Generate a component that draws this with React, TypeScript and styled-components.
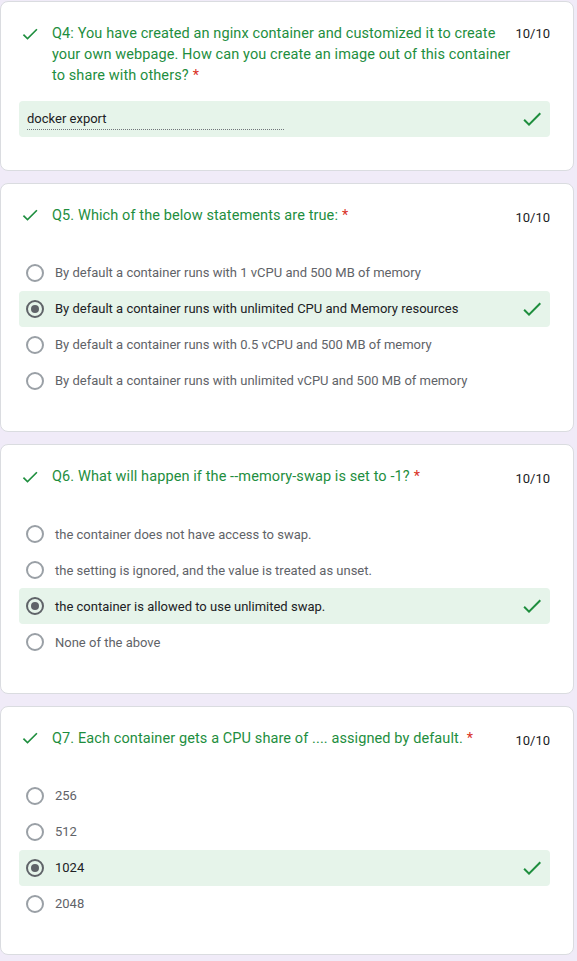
import React from "react";
import styled, { createGlobalStyle } from "styled-components";

const GlobalStyle = createGlobalStyle`
  html, body { margin: 0; padding: 0; background: #f0ebf8; }
  body { font-family: Roboto, "Liberation Sans", Arial, sans-serif; }
`;

const Page = styled.div`
  display: flex;
  flex-direction: column;
  gap: 12px;
  padding: 1px 3px 8px 0;
  width: 577px;
  box-sizing: border-box;
`;

const Card = styled.section`
  background: #fff;
  border: 1px solid #dadce0;
  border-radius: 8px;
  padding: 21px 23px 32.5px 18px;
  display: flex;
  flex-direction: column;
`;

const Header = styled.div`
  display: flex;
  align-items: flex-start;
`;

const IconSlot = styled.div`
  width: 33px;
  flex: none;
  display: flex;
  align-items: center;
  height: 21px;
  padding-left: 1px;
  box-sizing: border-box;
`;

const Title = styled.div`
  flex: 1;
  max-width: 463px;
  font-size: 14.5px;
  line-height: 21px;
  color: #1e8e3e;
  letter-spacing: 0.1px;
`;

const Req = styled.span`
  color: #d93025;
  padding-left: 4px;
`;

const Score = styled.div<{ $offset?: number }>`
  margin-left: auto;
  font-size: 13px;
  line-height: 21px;
  color: #202124;
  transform: translateY(${(p) => p.$offset ?? 0}px);
`;

const AnswerBox = styled.div`
  margin-top: 15px;
  height: 36px;
  background: #e6f4ea;
  border-radius: 4px;
  display: flex;
  align-items: center;
  padding: 0 6px 0 8px;
`;

const AnswerText = styled.div`
  width: 257px;
  font-size: 13px;
  line-height: 20px;
  color: #202124;
  border-bottom: 1px dotted #70757a;
  margin-top: 1px;
`;

const Options = styled.div`
  margin-top: 29px;
  display: flex;
  flex-direction: column;
`;

const OptionRow = styled.div<{ $selected?: boolean }>`
  height: 36px;
  display: flex;
  align-items: center;
  padding: 0 6px 0 7px;
  border-radius: 4px;
  background: ${(p) => (p.$selected ? "#e6f4ea" : "transparent")};
`;

const Radio = styled.div<{ $selected?: boolean }>`
  width: 18px;
  height: 18px;
  box-sizing: border-box;
  border-radius: 50%;
  border: 2px solid ${(p) => (p.$selected ? "#5f6368" : "#9aa0a6")};
  display: flex;
  align-items: center;
  justify-content: center;
  flex: none;
  &::after {
    content: "";
    width: 8px;
    height: 8px;
    border-radius: 50%;
    background: #5f6368;
    display: ${(p) => (p.$selected ? "block" : "none")};
  }
`;

const OptionLabel = styled.div<{ $selected?: boolean }>`
  margin-left: 11px;
  font-size: 13px;
  color: ${(p) => (p.$selected ? "#202124" : "#5f6368")};
`;

const RightIcon = styled.div`
  margin-left: auto;
  display: flex;
`;

const Check = ({ size = 24 }: { size?: number }) => (
  <svg width={size} height={size} viewBox="0 0 24 24" fill="#1e8e3e">
    <path d="M9 16.17L4.83 12l-1.42 1.41L9 19 21 7l-1.41-1.41z" />
  </svg>
);

type Q = {
  title: string;
  options: string[];
  selected: number;
};

const choiceQs: Q[] = [
  {
    title: "Q5. Which of the below statements are true:",
    options: [
      "By default a container runs with 1 vCPU and 500 MB of memory",
      "By default a container runs with unlimited CPU and Memory resources",
      "By default a container runs with 0.5 vCPU and 500 MB of memory",
      "By default a container runs with unlimited vCPU and 500 MB of memory",
    ],
    selected: 1,
  },
  {
    title: "Q6. What will happen if the --memory-swap is set to -1?",
    options: [
      "the container does not have access to swap.",
      "the setting is ignored, and the value is treated as unset.",
      "the container is allowed to use unlimited swap.",
      "None of the above",
    ],
    selected: 2,
  },
  {
    title: "Q7. Each container gets a CPU share of .... assigned by default.",
    options: ["256", "512", "1024", "2048"],
    selected: 2,
  },
];

export default function App() {
  return (
    <>
      <GlobalStyle />
      <Page>
        <Card>
          <Header>
            <IconSlot>
              <Check size={20} />
            </IconSlot>
            <Title>
              Q4: You have created an nginx container and customized it to create your own
              webpage. How can you create an image out of this container to share with
              others?<Req>*</Req>
            </Title>
            <Score>10/10</Score>
          </Header>
          <AnswerBox>
            <AnswerText>docker export</AnswerText>
            <RightIcon>
              <Check />
            </RightIcon>
          </AnswerBox>
        </Card>
        {choiceQs.map((q) => (
          <Card key={q.title}>
            <Header>
              <IconSlot>
                <Check size={20} />
              </IconSlot>
              <Title>
                {q.title}
                <Req>*</Req>
              </Title>
              <Score $offset={2}>10/10</Score>
            </Header>
            <Options>
              {q.options.map((o, i) => (
                <OptionRow key={o} $selected={i === q.selected}>
                  <Radio $selected={i === q.selected} />
                  <OptionLabel $selected={i === q.selected}>{o}</OptionLabel>
                  {i === q.selected && (
                    <RightIcon>
                      <Check />
                    </RightIcon>
                  )}
                </OptionRow>
              ))}
            </Options>
          </Card>
        ))}
      </Page>
    </>
  );
}
